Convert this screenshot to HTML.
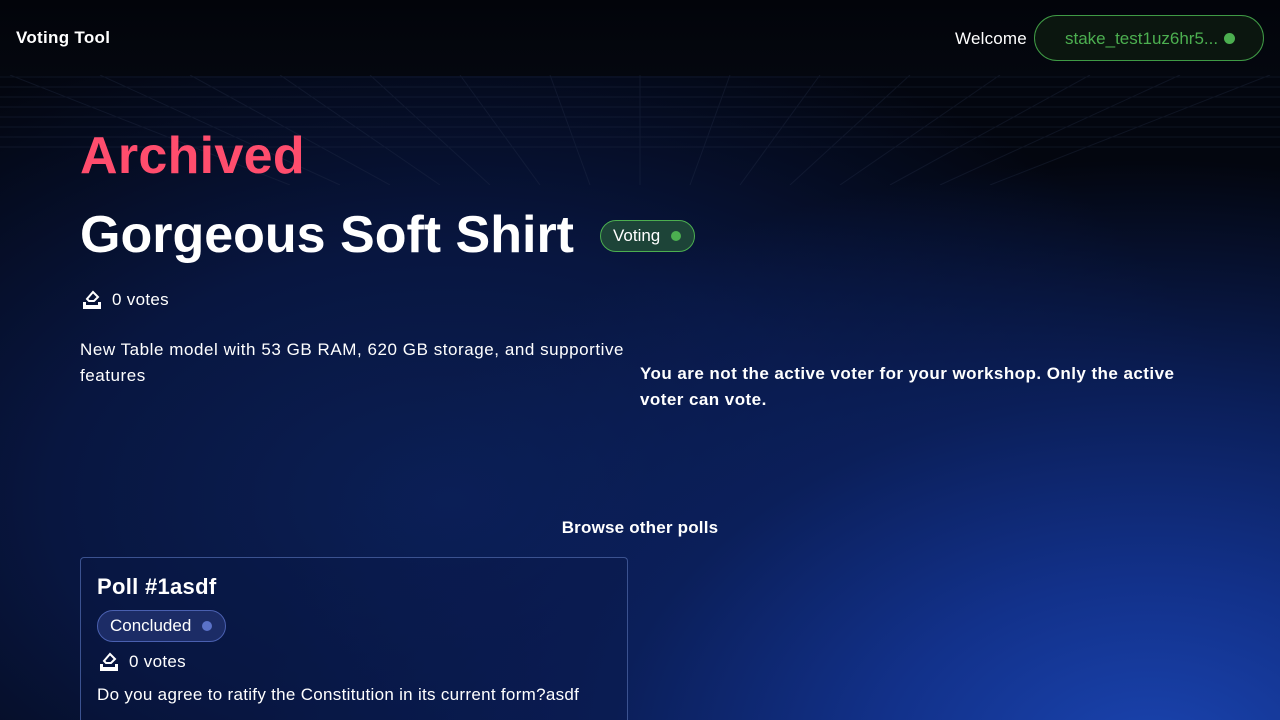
<!DOCTYPE html>
<html><head><meta charset="utf-8"><style>
*{margin:0;padding:0;box-sizing:border-box}
html{width:1280px;height:720px;overflow:hidden;background:#03060f}
body{width:1280px;height:720px;overflow:hidden;font-family:"Liberation Sans",sans-serif;color:#fff;
background:radial-gradient(ellipse 900px 600px at 1150px 760px,#1a44b0 0%,#12318a 30%,#0b1f5a 60%,rgba(8,20,60,0) 100%),
radial-gradient(ellipse 800px 500px at 450px 500px,#0b1f55 0%,#081640 50%,rgba(5,10,30,0) 100%),#03060f;position:relative}
.top{position:absolute;left:0;top:0;width:1280px;height:76px;background:linear-gradient(#02040a,#04070f)}
.logo{position:absolute;left:16px;top:28px;font-weight:bold;font-size:17px;letter-spacing:.3px}
.welcome{position:absolute;left:955px;top:29px;font-size:17px;letter-spacing:.2px}
.stake{position:absolute;left:1034px;top:15px;width:230px;height:46px;border:1px solid #3f9a45;border-radius:23px;background:#0b160f;color:#4caf50;font-size:17px;padding:13px 0 0 30px}
.stake i{position:absolute;right:28px;top:17px;width:11px;height:11px;border-radius:50%;background:#4caf50}
svg.grid{position:absolute;left:0;top:75px}
h1{position:absolute;left:80px;top:126px;font-size:52px;color:#ff4d6d;font-weight:bold;letter-spacing:.3px}
h2{position:absolute;left:80px;top:205px;font-size:52px;font-weight:bold}
.badge{position:absolute;border-radius:16px;font-size:17px;padding:0 0 0 12px}
.badge i{position:absolute;right:13px;top:50%;margin-top:-5px;width:10px;height:10px;border-radius:50%}
.votes{position:absolute;font-size:17px;letter-spacing:.3px}
.votes svg{position:absolute;left:0;top:0}
.desc{position:absolute;left:80px;top:337px;width:560px;font-size:17px;line-height:26px;letter-spacing:.55px}
.warn{position:absolute;left:640px;top:361px;width:560px;font-size:17px;line-height:26px;font-weight:bold;letter-spacing:.45px}
.browse{position:absolute;left:0;width:1280px;top:518px;text-align:center;font-weight:bold;font-size:17px;letter-spacing:.2px}
.card{position:absolute;left:80px;top:557px;width:548px;height:163px;border:1px solid #3b5290;border-bottom:none;border-radius:4px 4px 0 0;background:rgba(8,22,70,.35)}
</style></head><body>
<div class="top"></div>
<svg class="grid" width="1280" height="110">
<g stroke="#2a3550" stroke-width="1" opacity=".3">
<line x1="0" y1="2" x2="1280" y2="2"/><line x1="0" y1="12" x2="1280" y2="12"/><line x1="0" y1="22" x2="1280" y2="22"/><line x1="0" y1="32" x2="1280" y2="32"/><line x1="0" y1="42" x2="1280" y2="42"/><line x1="0" y1="52" x2="1280" y2="52"/><line x1="0" y1="62" x2="1280" y2="62"/><line x1="0" y1="72" x2="1280" y2="72"/>
<line x1="640" y1="0" x2="640" y2="110"/>
<line x1="550" y1="0" x2="590" y2="110"/><line x1="730" y1="0" x2="690" y2="110"/>
<line x1="460" y1="0" x2="540" y2="110"/><line x1="820" y1="0" x2="740" y2="110"/>
<line x1="370" y1="0" x2="490" y2="110"/><line x1="910" y1="0" x2="790" y2="110"/>
<line x1="280" y1="0" x2="440" y2="110"/><line x1="1000" y1="0" x2="840" y2="110"/>
<line x1="190" y1="0" x2="390" y2="110"/><line x1="1090" y1="0" x2="890" y2="110"/>
<line x1="100" y1="0" x2="340" y2="110"/><line x1="1180" y1="0" x2="940" y2="110"/>
<line x1="10" y1="0" x2="290" y2="110"/><line x1="1270" y1="0" x2="990" y2="110"/>
</g></svg>
<div class="logo">Voting Tool</div>
<div class="welcome">Welcome</div>
<div class="stake">stake_test1uz6hr5...<i></i></div>
<h1>Archived</h1>
<h2>Gorgeous Soft Shirt</h2>
<div class="badge" style="left:600px;top:220px;width:95px;height:32px;line-height:30px;border:1px solid #4caf50;background:#1d4438">Voting<i style="background:#4caf50"></i></div>
<div class="votes" style="left:82px;top:290px"><svg width="20" height="20" viewBox="0 0 20 20"><path d="M1 12h3v3h12v-3h3v7H1z" fill="#fff"/><path d="M11 2l5 5-4 4H7L5 9z" fill="none" stroke="#fff" stroke-width="2"/></svg><span style="margin-left:30px">0 votes</span></div>
<div class="desc">New Table model with 53 GB RAM, 620 GB storage, and supportive features</div>
<div class="warn">You are not the active voter for your workshop. Only the active voter can vote.</div>
<div class="browse">Browse other polls</div>
<div class="card">
<div style="position:absolute;left:16px;top:16px;font-size:22px;font-weight:bold;letter-spacing:.3px">Poll #1asdf</div>
<div class="badge" style="left:16px;top:52px;width:129px;height:32px;line-height:30px;border:1px solid #4a60b0;background:#1c2c66">Concluded<i style="background:#5b72c8"></i></div>
<div class="votes" style="left:18px;top:94px"><svg width="20" height="20" viewBox="0 0 20 20"><path d="M1 12h3v3h12v-3h3v7H1z" fill="#fff"/><path d="M11 2l5 5-4 4H7L5 9z" fill="none" stroke="#fff" stroke-width="2"/></svg><span style="margin-left:30px">0 votes</span></div>
<div style="position:absolute;left:16px;top:127px;font-size:17px;letter-spacing:.3px">Do you agree to ratify the Constitution in its current form?asdf</div>
</div>
</body></html>
